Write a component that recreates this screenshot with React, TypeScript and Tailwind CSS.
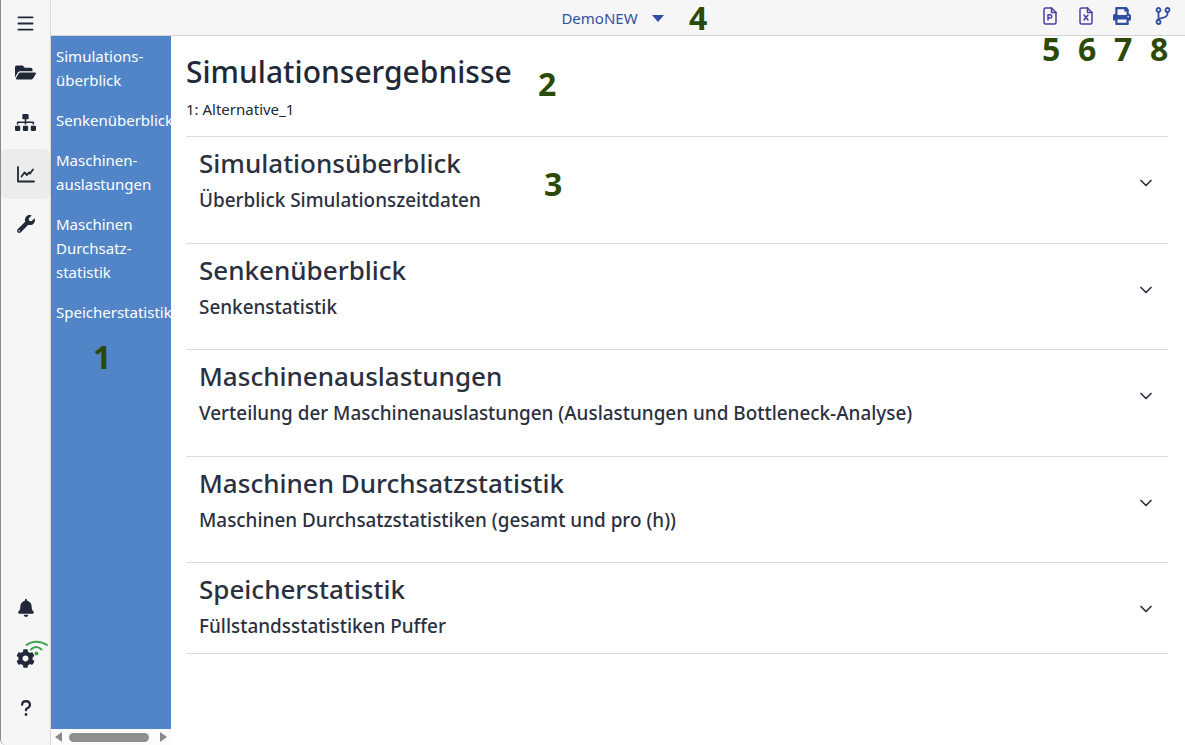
import { ChevronDown, Menu } from "lucide-react";
import { FaBell, FaCog, FaFolderOpen, FaPrint, FaSitemap, FaWrench } from "react-icons/fa";
import { FaQuestion } from "react-icons/fa6";

const sections = [
  { title: "Simulationsüberblick", sub: "Überblick Simulationszeitdaten", h: "h-[107px]" },
  { title: "Senkenüberblick", sub: "Senkenstatistik", h: "h-[106px]" },
  { title: "Maschinenauslastungen", sub: "Verteilung der Maschinenauslastungen (Auslastungen und Bottleneck-Analyse)", h: "h-[107px]" },
  { title: "Maschinen Durchsatzstatistik", sub: "Maschinen Durchsatzstatistiken (gesamt und pro (h))", h: "h-[106px]" },
  { title: "Speicherstatistik", sub: "Füllstandsstatistiken Puffer", h: "h-[91px]" },
];

function FileIcon({ letter, color }: { letter: "P" | "X"; color: string }) {
  return (
    <svg width="14" height="18" viewBox="0 0 14 18" fill="none" stroke={color} strokeWidth="1.5" strokeLinejoin="round" strokeLinecap="round">
      <path d="M2.500 1h6l4.500 4.500v10a1.500 1.500 0 0 1-1.500 1.500h-9A1.500 1.500 0 0 1 1 15.500v-13A1.500 1.500 0 0 1 2.500 1z" />
      <path d="M8.500 1v4.500H13" />
      {letter === "P" ? (
        <path d="M5 13V7.800h2.200a1.600 1.600 0 0 1 0 3.200H5" />
      ) : (
        <path d="M5 8l4 5M9 8l-4 5" />
      )}
    </svg>
  );
}

function Num({ children, className }: { children: string; className: string }) {
  return (
    <span className={`absolute text-[32px] leading-none font-bold text-[#2b4a06] font-['Noto_Sans',sans-serif] ${className}`}>
      {children}
    </span>
  );
}

export default function App() {
  return (
    <div className="relative flex h-[745px] w-[1185px] overflow-hidden rounded-bl-md border-l border-l-[#8a8a8a] bg-white font-['Noto_Sans',sans-serif] text-[#212837]">
      {/* left icon rail */}
      <aside className="flex w-[50px] shrink-0 flex-col items-center border-r border-r-[#d8d8d8] bg-[#f6f6f6] pb-[12px] text-[#212837]">
        <div className="flex h-[47px] w-full items-center justify-center">
          <Menu size={21} strokeWidth={2.2} />
        </div>
        <div className="flex h-[50px] w-full items-center justify-center"><FaFolderOpen size={21} /></div>
        <div className="flex h-[50px] w-full items-center justify-center"><FaSitemap size={21} /></div>
        <div className="mt-[2px] flex h-[50px] w-[49px] items-center justify-center rounded-md bg-[#ececec]">
          <svg width="18" height="17" viewBox="0 0 18 17" fill="none" stroke="#212837" strokeWidth="1.800" strokeLinecap="round" strokeLinejoin="round">
            <path d="M1 1v14.500h16" />
            <path d="M4.500 10.500l3-4 2.500 2.500 2-2.500 1 1 3-4" />
          </svg>
        </div>
        <div className="flex h-[50px] w-full items-center justify-center"><FaWrench size={18} /></div>
        <div className="mt-auto flex h-[50px] w-full items-center justify-center"><FaBell size={18} /></div>
        <div className="relative flex h-[50px] w-full items-center justify-center">
          <FaCog size={19} />
          <svg className="absolute left-[24px] top-[6px]" width="24" height="20" viewBox="0 0 24 20" fill="none" stroke="#3fa34d" strokeWidth="2" strokeLinecap="round">
            <path d="M1.500 6C7 1.500 15.500 1.500 22 6" />
            <path d="M6 10.500C9 7.500 13 7.500 16.500 10.500" />
            <circle cx="11.500" cy="14.500" r="2" fill="#3fa34d" stroke="none" />
          </svg>
        </div>
        <div className="flex h-[50px] w-full items-center justify-center"><FaQuestion size={18} /></div>
      </aside>

      <div className="flex min-w-0 flex-1 flex-col">
        {/* top bar */}
        <header className="relative flex h-[36px] shrink-0 items-center justify-center border-b border-b-[#d4d4d4] bg-[#f6f6f6]">
          <div className="mr-[11px] flex items-center pt-[1px] text-[15px] text-[#33529e]">
            DemoNEW
            <svg className="ml-[14px]" width="12" height="7" viewBox="0 0 12 7"><path d="M0 0h12L6 7z" fill="#2f4fa0" /></svg>
          </div>
          <div className="absolute right-[4px] top-0 flex h-[32px] items-center text-[#2f4fa0]">
            <div className="flex w-[36px] justify-center"><FileIcon letter="P" color="#4b3fa6" /></div>
            <div className="flex w-[36px] justify-center"><FileIcon letter="X" color="#4b3fa6" /></div>
            <div className="flex w-[36px] justify-center"><FaPrint size={18} /></div>
            <div className="ml-[5px] flex w-[36px] justify-center">
              <svg width="16" height="18" viewBox="0 0 16 18" fill="none" stroke="#2f4fa0" strokeWidth="1.800" strokeLinecap="round">
                <circle cx="3.500" cy="3" r="2" />
                <circle cx="3.500" cy="15" r="2" />
                <circle cx="12.500" cy="3" r="2" />
                <path d="M3.500 5v8" />
                <path d="M12.500 5v1.500c0 3-2.500 3.800-5 4.300-2 .4-4 1-4 2.200" />
              </svg>
            </div>
          </div>
        </header>

        <div className="flex min-h-0 flex-1">
          {/* section nav */}
          <div className="flex w-[120px] shrink-0 flex-col">
            <nav className="flex flex-1 flex-col gap-[16px] bg-[#5285c8] pl-[5px] pt-[8px] text-[15px] leading-[24px] text-white">
              <a>Simulations-<br />überblick</a>
              <a className="whitespace-nowrap">Senkenüberblick</a>
              <a>Maschinen-<br />auslastungen</a>
              <a>Maschinen<br />Durchsatz-<br />statistik</a>
              <a className="whitespace-nowrap">Speicherstatistik</a>
            </nav>
            <div className="flex h-[16px] items-center bg-[#fbfbfb] px-[4px]">
              <svg width="8" height="10" viewBox="0 0 8 10"><path d="M7 0v10L0 5z" fill="#8a8a8a" /></svg>
              <div className="ml-[6px] h-[9px] w-[80px] rounded-full bg-[#8f8f8f]" />
              <svg className="ml-[10px]" width="8" height="10" viewBox="0 0 8 10"><path d="M1 0v10l7-5z" fill="#8a8a8a" /></svg>
            </div>
          </div>

          {/* results */}
          <main className="min-w-0 flex-1 pl-[15px] pr-[17px]">
            <h1 className="mt-[16px] text-[30px] leading-[40px] font-medium text-[#212837]">Simulationsergebnisse</h1>
            <p className="mt-[7px] text-[15px] leading-[20px]">1: Alternative_1</p>
            <div className="mt-[17px] border-t border-t-[#dcdcdc]">
              {sections.map((s) => (
                <div key={s.title} className={`flex ${s.h} items-start border-b border-b-[#dcdcdc] pl-[13px] pr-[12px] pt-[8px]`}>
                  <div className="flex-1">
                    <h2 className="text-[26px] leading-[36px] font-medium text-[#2b3040]">{s.title}</h2>
                    <p className="mt-[7px] text-[18.9px] leading-[24px] font-medium text-[#2b3040]">{s.sub}</p>
                  </div>
                  <ChevronDown size={20} className="mt-[28px] text-[#2b3040]" />
                </div>
              ))}
            </div>
          </main>
        </div>
      </div>

      {/* annotation numbers */}
      <Num className="left-[92px] top-[341px]">1</Num>
      <Num className="left-[537px] top-[68px]">2</Num>
      <Num className="left-[543px] top-[168px]">3</Num>
      <Num className="left-[688px] top-[2px]">4</Num>
      <Num className="left-[1041px] top-[33px]">5</Num>
      <Num className="left-[1077px] top-[33px]">6</Num>
      <Num className="left-[1113px] top-[33px]">7</Num>
      <Num className="left-[1149px] top-[33px]">8</Num>
    </div>
  );
}
